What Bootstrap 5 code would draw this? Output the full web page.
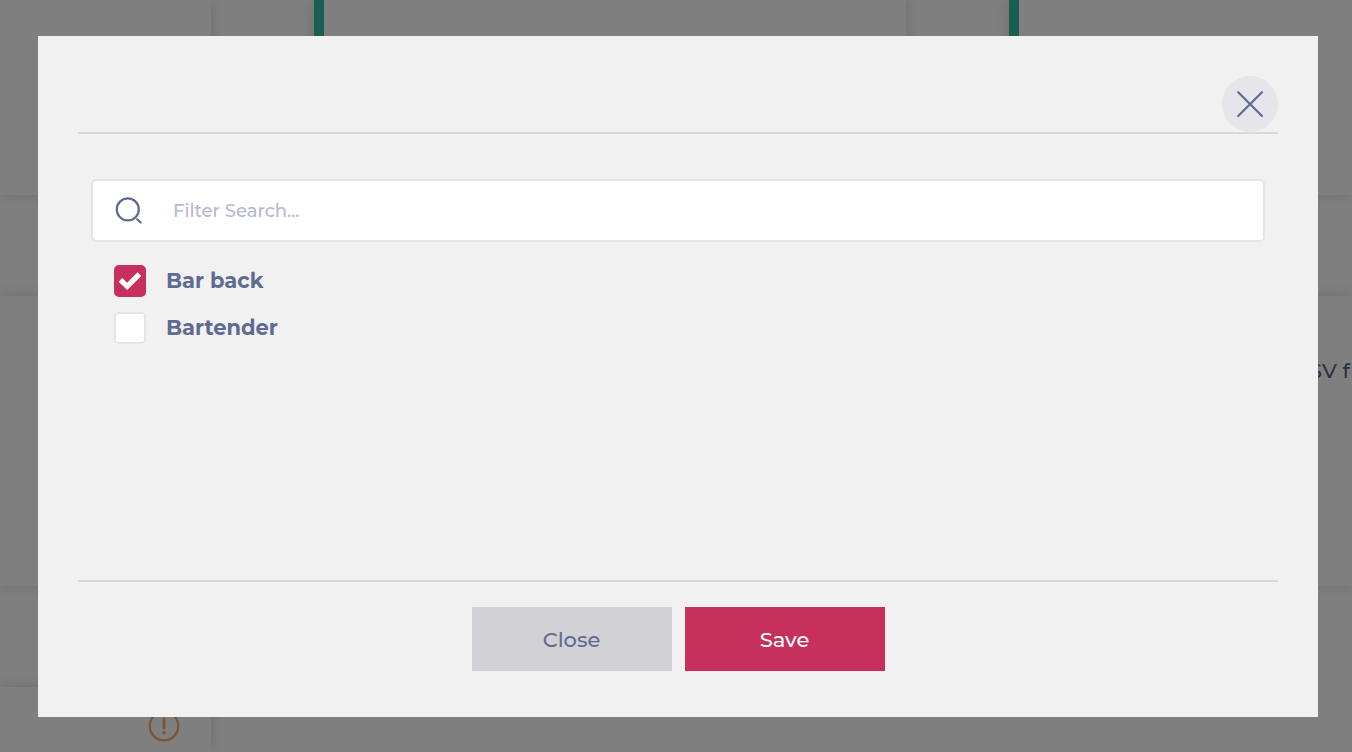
<!DOCTYPE html>
<html lang="en">
<head>
<meta charset="utf-8">
<meta name="viewport" content="width=device-width, initial-scale=1">
<title>Filter</title>
<link href="https://cdn.jsdelivr.net/npm/bootstrap@5.3.0/dist/css/bootstrap.min.css" rel="stylesheet">
<style>
:root { --ink: #606b92; --brand: #c7305c; --panel: #f1f1f1; }
body { font-family: Montserrat, Inter, sans-serif; color: var(--ink); background: #fff; overflow: hidden; }

/* dashboard behind the dialog */
.board { display: grid; gap: 101px; grid-template-rows: 195px 290px minmax(0, 1fr); height: 100vh; overflow: hidden; }
.board-row { display: grid; grid-template-columns: 15.6% 43.8% 1fr; gap: 103px; min-height: 0; }
.tile { background: #fff; box-shadow: 0 0 14px rgba(0, 0, 0, .15); min-height: 0; }
.tile-accent { border-left: 10px solid #30bea2; }
.tile-text { font-size: 21px; font-weight: 500; line-height: 32px; padding: 59px 2px 0 0; color: #5a6290; }
.tile-alert { padding: 23px 31px 0; overflow: hidden; }

/* dialog */
.modal { padding: 36px 34px 0 38px; }
.modal-dialog { max-width: none; margin: 0; }
.modal-content { background: var(--panel); border: 0; border-radius: 0; padding: 40px 40px 46px; color: inherit; }
.modal-header, .modal-footer { border-color: #d9d9db; border-width: 2px; border-radius: 0; padding: 0; }
.modal-header { justify-content: flex-end; }
.modal-body { min-height: 446px; padding: 45px 13px 0; }
.modal-footer { gap: 13px; padding-top: 25px; }
.modal-footer > * { margin: 0; }
.close-round { width: 56px; height: 56px; background: #e5e5eb; color: var(--ink); }
.search-box { background: #fff; border: 2px solid #e5e5e6; border-radius: 5px; height: 63px; padding-left: 21px; gap: 29px; }
.search-box .form-control { font-size: 18px; font-weight: 500; line-height: 28px; color: var(--ink); }
.search-box .form-control::placeholder { color: #b5b9d3; opacity: 1; }
.choices { padding: 23px 23px 0; gap: 15px; }
.choice { gap: 20px; min-height: 32px; }
.choice .form-check-input { width: 32px; height: 32px; margin: 0; float: none; flex: none; border: 2px solid #e5e5e6; border-radius: 5px; background-color: #fff; }
.choice .form-check-input:checked { background-color: var(--brand); border-color: var(--brand); background-size: 28px 28px;
  background-image: url("data:image/svg+xml,%3csvg xmlns='http://www.w3.org/2000/svg' viewBox='0 0 28 28'%3e%3cpath fill='none' stroke='%23fff' stroke-width='5.2' stroke-linejoin='miter' d='M4.4 12.8 11.2 19.4 23.4 7.2'/%3e%3c/svg%3e"); }
.choice .form-check-label { font-size: 21px; font-weight: 700; line-height: 32px; }
.action { width: 200px; height: 64px; border: 0; border-radius: 0; font-size: 21px; font-weight: 500; padding: 8px 0 6px; }
.action-close { background: #d2d1d6; color: var(--ink); }
.action-save { background: var(--brand); color: #fff; }
</style>
</head>
<body>
<main class="board" aria-hidden="true">
  <div class="board-row">
    <div class="tile"></div>
    <div class="tile tile-accent"></div>
    <div class="tile tile-accent"></div>
  </div>
  <div class="tile tile-text text-end">SV f</div>
  <div class="board-row">
    <div class="tile tile-alert text-end">
      <svg width="32" height="32" viewBox="0 0 32 32" fill="none" stroke="#ffa45a" stroke-width="2.2"><circle cx="16" cy="16" r="14.3"/><path d="M16 9v9" stroke-width="2.8" stroke-linecap="round"/><circle cx="16" cy="22.7" r="1.8" fill="#ffa45a" stroke="none"/></svg>
    </div>
  </div>
</main>

<div class="modal-backdrop show"></div>
<div class="modal show d-block" tabindex="-1" role="dialog" aria-modal="true" aria-label="Filter">
  <div class="modal-dialog">
    <form class="modal-content">
      <div class="modal-header">
        <button type="button" class="btn close-round rounded-circle border-0 p-0 d-flex align-items-center justify-content-center" aria-label="Dismiss">
          <svg width="28" height="28" viewBox="0 0 28 28" fill="none" stroke="currentColor" stroke-width="2.2" stroke-linecap="round"><path d="M2.2 2.2 26 26M26 2.2 2.2 26"/></svg>
        </button>
      </div>
      <div class="modal-body">
        <div class="search-box d-flex align-items-center">
          <svg class="flex-shrink-0" width="30" height="30" viewBox="0 0 30 30" fill="none" stroke="#606b92" stroke-width="2.2" stroke-linecap="round" aria-hidden="true"><circle cx="13.8" cy="13.4" r="11"/><path d="m23.2 23.3 3.4 3.2"/></svg>
          <input type="search" class="form-control border-0 shadow-none bg-transparent px-0" placeholder="Filter Search..." aria-label="Filter Search">
        </div>
        <div class="choices d-flex flex-column">
          <div class="choice d-flex align-items-center">
            <input class="form-check-input" type="checkbox" id="bar-back" checked>
            <label class="form-check-label" for="bar-back">Bar back</label>
          </div>
          <div class="choice d-flex align-items-center">
            <input class="form-check-input" type="checkbox" id="bartender">
            <label class="form-check-label" for="bartender">Bartender</label>
          </div>
        </div>
      </div>
      <div class="modal-footer justify-content-center">
        <button type="button" class="btn action action-close">Close</button>
        <button type="submit" class="btn action action-save">Save</button>
      </div>
    </form>
  </div>
</div>
<script src="https://cdn.jsdelivr.net/npm/bootstrap@5.3.0/dist/js/bootstrap.bundle.min.js"></script>
</body>
</html>
